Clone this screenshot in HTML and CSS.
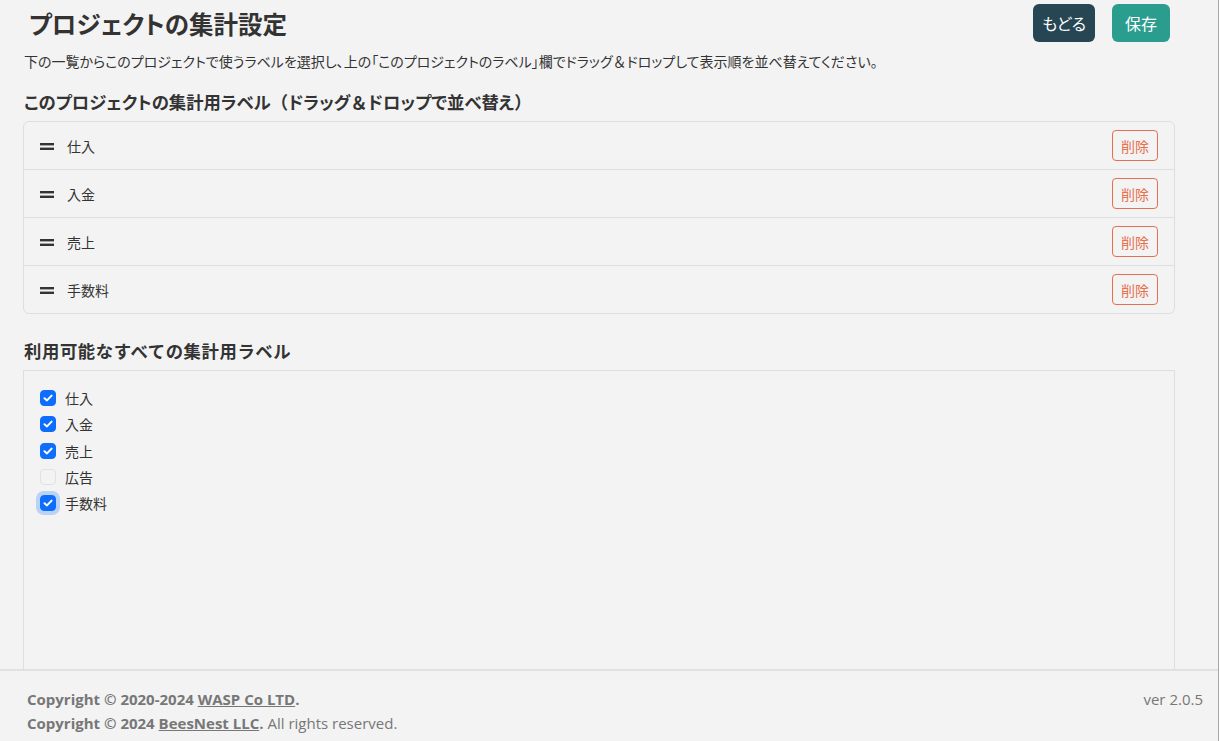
FILE: index.html
```html
<!DOCTYPE html>
<html lang="ja">
<head>
    <meta charset="UTF-8">
    <meta name="viewport" content="width=device-width, initial-scale=1.0">
    <title>プロジェクトの集計設定</title>
    <link rel="stylesheet" href="styles.css">
</head>
<body>
    <div class="page">
        <div class="container">
            <!-- ヘッダー -->
            <div class="header">
                <h1 class="title">プロジェクトの集計設定</h1>
                <div class="actions">
                    <button class="btn btn-back">もどる</button>
                    <button class="btn btn-save">保存</button>
                </div>
            </div>
            <p class="lead">下の一覧からこのプロジェクトで使うラベルを選択し、上の「このプロジェクトのラベル」欄でドラッグ<span class="fw">＆</span>ドロップして表示順を並べ替えてください。</p>

            <h2 class="section-title first">このプロジェクトの集計用ラベル<span class="fw">（</span>ドラッグ<span class="fw">＆</span>ドロップで並べ替え<span class="fw">）</span></h2>
            <ul class="sort-list">
                <li class="sort-item">
                    <span class="handle"><svg width="14" height="10" viewBox="0 0 14 10"><rect x="0" y="2" width="14" height="2.4" fill="#333"/><rect x="0" y="6.6" width="14" height="2.4" fill="#333"/></svg></span>
                    <span class="label">仕入</span>
                    <button class="btn-delete">削除</button>
                </li>
                <li class="sort-item">
                    <span class="handle"><svg width="14" height="10" viewBox="0 0 14 10"><rect x="0" y="2" width="14" height="2.4" fill="#333"/><rect x="0" y="6.6" width="14" height="2.4" fill="#333"/></svg></span>
                    <span class="label">入金</span>
                    <button class="btn-delete">削除</button>
                </li>
                <li class="sort-item">
                    <span class="handle"><svg width="14" height="10" viewBox="0 0 14 10"><rect x="0" y="2" width="14" height="2.4" fill="#333"/><rect x="0" y="6.6" width="14" height="2.4" fill="#333"/></svg></span>
                    <span class="label">売上</span>
                    <button class="btn-delete">削除</button>
                </li>
                <li class="sort-item">
                    <span class="handle"><svg width="14" height="10" viewBox="0 0 14 10"><rect x="0" y="2" width="14" height="2.4" fill="#333"/><rect x="0" y="6.6" width="14" height="2.4" fill="#333"/></svg></span>
                    <span class="label">手数料</span>
                    <button class="btn-delete">削除</button>
                </li>
            </ul>

            <h2 class="section-title plain">利用可能なすべての集計用ラベル</h2>
            <div class="check-box">
                <label class="check-row">
                    <span class="check checked"><svg width="10" height="8" viewBox="0 0 10 8"><path d="M1.5 4.2 L4 6.4 L8.6 1.6" fill="none" stroke="#fff" stroke-width="2" stroke-linecap="round" stroke-linejoin="round"/></svg></span>
                    <span>仕入</span>
                </label>
                <label class="check-row">
                    <span class="check checked"><svg width="10" height="8" viewBox="0 0 10 8"><path d="M1.5 4.2 L4 6.4 L8.6 1.6" fill="none" stroke="#fff" stroke-width="2" stroke-linecap="round" stroke-linejoin="round"/></svg></span>
                    <span>入金</span>
                </label>
                <label class="check-row">
                    <span class="check checked"><svg width="10" height="8" viewBox="0 0 10 8"><path d="M1.5 4.2 L4 6.4 L8.6 1.6" fill="none" stroke="#fff" stroke-width="2" stroke-linecap="round" stroke-linejoin="round"/></svg></span>
                    <span>売上</span>
                </label>
                <label class="check-row">
                    <span class="check"></span>
                    <span>広告</span>
                </label>
                <label class="check-row">
                    <span class="check checked focused"><svg width="10" height="8" viewBox="0 0 10 8"><path d="M1.5 4.2 L4 6.4 L8.6 1.6" fill="none" stroke="#fff" stroke-width="2" stroke-linecap="round" stroke-linejoin="round"/></svg></span>
                    <span>手数料</span>
                </label>
            </div>
        </div>

        <!-- フッター -->
        <footer class="footer">
            <div class="copy">
                <div><b>Copyright © 2020-2024 <a href="#">WASP Co LTD</a>.</b></div>
                <div><b>Copyright © 2024 <a href="#">BeesNest LLC</a>.</b> All rights reserved.</div>
            </div>
            <div class="version">ver 2.0.5</div>
        </footer>
    </div>
</body>
</html>
```
FILE: styles.css
```css
/* 全体 */
body {
    margin: 0;
    background: #f3f3f3;
    color: #333;
    font-family: "Noto Sans CJK JP", "Open Sans", sans-serif;
    font-feature-settings: "palt";
    overflow: hidden;
}

/* 全角のまま表示する記号 */
.fw {
    font-feature-settings: normal;
}

.page {
    min-height: 100vh;
    box-sizing: border-box;
    border-right: 1px solid #a8a8a8;
}

.container {
    width: 1152px;
    padding-left: 23px;
}

/* ヘッダー */
.header {
    display: flex;
    align-items: center;
    justify-content: space-between;
    padding-top: 4px;
}

.title {
    margin: 0 0 0 6px;
    font-size: 24.5px;
    font-weight: 700;
    color: #333;
}

.actions {
    display: flex;
    gap: 17px;
    margin-right: 5px;
}

.btn {
    height: 38px;
    padding: 0 13px;
    border: none;
    border-radius: 6px;
    color: #fff;
    font-family: inherit;
    font-feature-settings: "palt";
    font-size: 16px;
    cursor: pointer;
}

.btn-back {
    padding: 0 9px;
    background: #264653;
}

.btn-save {
    background: #2a9d8f;
}

.lead {
    margin: 7px 0 0 1px;
    font-size: 14px;
    line-height: 24px;
    color: #333;
}

.section-title {
    margin: 0;
    padding: 8px 0 7px 1px;
    font-size: 17.35px;
    font-weight: 700;
    line-height: 24px;
}

.section-title.first {
    padding-top: 17px;
}

.section-title.plain {
    font-feature-settings: normal;
    letter-spacing: 0.6px;
}

/* 並べ替えリスト */
.sort-list {
    list-style: none;
    margin: 0 0 17px;
    padding: 0;
    border: 1px solid #dedede;
    border-radius: 6px;
}

.sort-item {
    display: flex;
    align-items: center;
    height: 47px;
    padding: 0 16px;
    font-size: 14px;
    border-bottom: 1px solid #dedede;
}

.sort-item:last-child {
    border-bottom: none;
}

.handle {
    display: flex;
    width: 14px;
    margin-right: 13px;
}

.label {
    flex: 1;
}

.btn-delete {
    height: 31px;
    padding: 0 8px;
    border: 1px solid #e76f51;
    border-radius: 4px;
    background: transparent;
    color: #e76f51;
    font-family: inherit;
    font-size: 14px;
}

/* チェックボックス一覧 */
.check-box {
    height: 300px;
    padding: 14px 16px;
    border: 1px solid #dedede;
    font-size: 14px;
}

.check-row {
    display: flex;
    align-items: center;
    gap: 9px;
    height: 26.25px;
}

.check {
    display: flex;
    align-items: center;
    justify-content: center;
    box-sizing: border-box;
    width: 16px;
    height: 16px;
    border: 1px solid #dee2e6;
    border-radius: 4px;
    background: #f3f3f3;
}

.check.checked {
    background: #0d6efd;
    border-color: #0d6efd;
}

.check.focused {
    box-shadow: 0 0 0 4px rgba(13, 110, 253, 0.25);
}

/* フッター */
.footer {
    position: fixed;
    left: 0;
    right: 1px;
    bottom: 0;
    height: 72px;
    display: flex;
    justify-content: space-between;
    padding: 16px 15px 0 27px;
    box-sizing: border-box;
    background: #f3f3f3;
    border-top: 2px solid #dfe1e4;
    font-family: "Open Sans", sans-serif;
    font-size: 15px;
    line-height: 24px;
    color: #777;
}

.footer b {
    font-weight: 700;
}

.footer a {
    color: #777;
}

.version {
    line-height: 24px;
}
```
